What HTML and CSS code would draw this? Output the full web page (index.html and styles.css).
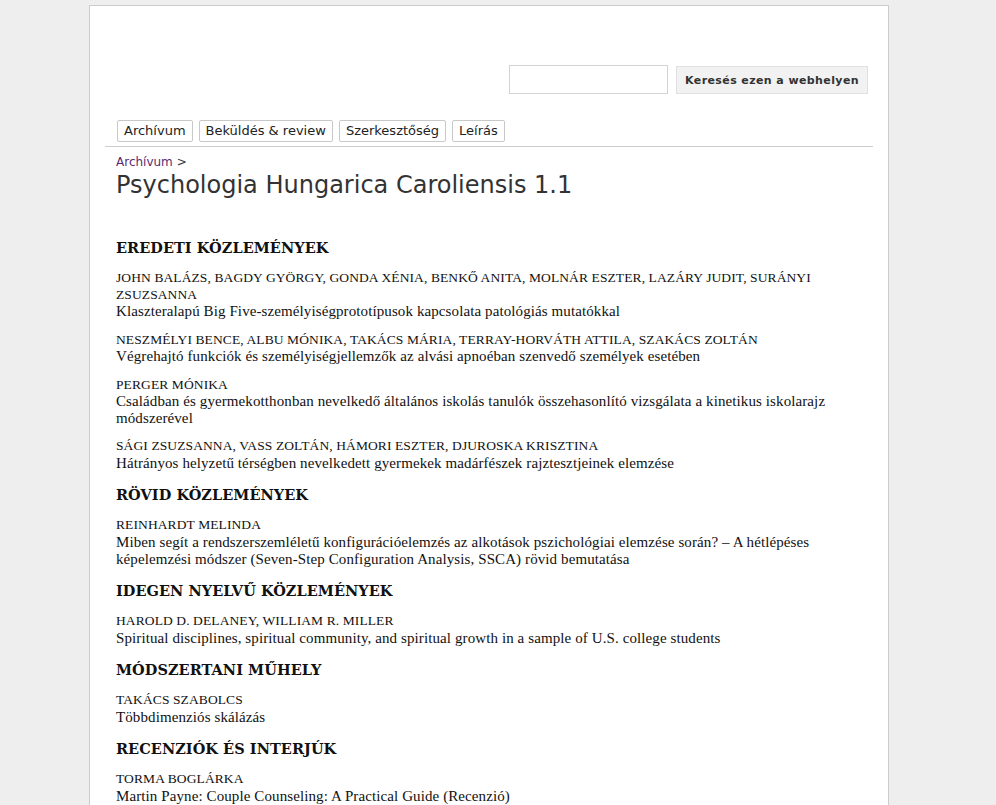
FILE: index.html
```html
<!DOCTYPE html>
<html>
<head>
    <meta charset="utf-8">
    <title>Psychologia Hungarica Caroliensis 1.1</title>
    <link rel="stylesheet" href="styles.css">
</head>
<body>
<div id="page">
    <div id="header">
        <div class="search">
            <input type="text" class="searchbox" value="">
            <button class="searchbutton">Keresés ezen a webhelyen</button>
        </div>
        <div class="nav">
            <a class="tab" href="#">Archívum</a>
            <a class="tab" href="#">Beküldés &amp; review</a>
            <a class="tab" href="#">Szerkesztőség</a>
            <a class="tab" href="#">Leírás</a>
        </div>
    </div>

    <div id="content">
        <div class="crumbs"><a href="#">Archívum</a> &gt;</div>
        <h1>Psychologia Hungarica Caroliensis 1.1</h1>

        <h2>Eredeti közlemények</h2>
        <div class="item">
            <div class="authors">JOHN BALÁZS, BAGDY GYÖRGY, GONDA XÉNIA, BENKŐ ANITA, MOLNÁR ESZTER, LAZÁRY JUDIT, SURÁNYI ZSUZSANNA</div>
            <div class="title">Klaszteralapú Big Five-személyiségprototípusok kapcsolata patológiás mutatókkal</div>
        </div>
        <div class="item">
            <div class="authors">NESZMÉLYI BENCE, ALBU MÓNIKA, TAKÁCS MÁRIA, TERRAY-HORVÁTH ATTILA, SZAKÁCS ZOLTÁN</div>
            <div class="title">Végrehajtó funkciók és személyiségjellemzők az alvási apnoéban szenvedő személyek esetében</div>
        </div>
        <div class="item">
            <div class="authors">PERGER MÓNIKA</div>
            <div class="title">Családban és gyermekotthonban nevelkedő általános iskolás tanulók összehasonlító vizsgálata a kinetikus iskolarajz módszerével</div>
        </div>
        <div class="item">
            <div class="authors">SÁGI ZSUZSANNA, VASS ZOLTÁN, HÁMORI ESZTER, DJUROSKA KRISZTINA</div>
            <div class="title">Hátrányos helyzetű térségben nevelkedett gyermekek madárfészek rajztesztjeinek elemzése</div>
        </div>

        <h2>Rövid közlemények</h2>
        <div class="item">
            <div class="authors">REINHARDT MELINDA</div>
            <div class="title">Miben segít a rendszerszemléletű konfigurációelemzés az alkotások pszichológiai elemzése során? – A hétlépéses képelemzési módszer (Seven-Step Configuration Analysis, SSCA) rövid bemutatása</div>
        </div>

        <h2>Idegen nyelvű közlemények</h2>
        <div class="item">
            <div class="authors">HAROLD D. DELANEY, WILLIAM R. MILLER</div>
            <div class="title">Spiritual disciplines, spiritual community, and spiritual growth in a sample of U.S. college students</div>
        </div>

        <h2>Módszertani műhely</h2>
        <div class="item">
            <div class="authors">TAKÁCS SZABOLCS</div>
            <div class="title">Többdimenziós skálázás</div>
        </div>

        <h2>Recenziók és interjúk</h2>
        <div class="item">
            <div class="authors">TORMA BOGLÁRKA</div>
            <div class="title">Martin Payne: Couple Counseling: A Practical Guide (Recenzió)</div>
        </div>
    </div>
</div>
</body>
</html>
```

FILE: styles.css
```css
body {
    margin: 0;
    background-color: #eeeeee;
}
#page {
    width: 798px;
    margin: 5px 0 0 89px;
    background-color: #ffffff;
    border: 1px solid #cccccc;
    border-bottom: none;
    min-height: 900px;
}
#header {
    margin: 0 15px;
    border-bottom: 1px solid #cccccc;
    padding-top: 59px;
}
.search {
    display: flex;
    justify-content: flex-end;
    gap: 8px;
    padding-right: 5px;
}
.searchbox {
    width: 159px;
    height: 29px;
    margin: 0;
    padding: 0;
    border: 1px solid #d4d4d4;
    box-sizing: border-box;
}
.searchbutton {
    margin: 1px 0 0 0;
    height: 28px;
    padding: 0 8px;
    border: 1px solid #e0e0e0;
    background-color: #f2f2f2;
    font-family: "DejaVu Sans", Verdana, sans-serif;
    font-size: 11px;
    font-weight: bold;
    letter-spacing: 0.4px;
    color: #333333;
}
.nav {
    display: flex;
    gap: 6px;
    padding: 26px 0 4px 12px;
}
.tab {
    display: inline-block;
    border: 1px solid #c8c8c8;
    border-radius: 2px;
    padding: 2px 6px;
    font-family: "DejaVu Sans", Verdana, sans-serif;
    font-size: 13px;
    line-height: 16px;
    color: #222222;
    text-decoration: none;
}
#content {
    padding: 8px 26px 0 26px;
}
.crumbs {
    font-family: "DejaVu Sans", Verdana, sans-serif;
    font-size: 12px;
    color: #333333;
}
.crumbs a {
    color: #5a2a70;
    text-decoration: none;
}
h1 {
    margin: 2px 0 40px 0;
    font-family: "DejaVu Sans", Verdana, sans-serif;
    font-weight: normal;
    font-size: 24px;
    color: #333333;
}
h2 {
    margin: 15px 0 14px 0;
    font-family: "DejaVu Serif", Georgia, serif;
    font-size: 14.5px;
    font-weight: bold;
    letter-spacing: 0.05px;
    text-transform: uppercase;
    color: #111111;
}
.item {
    margin-bottom: 12px;
    font-family: "Liberation Serif", "Times New Roman", serif;
    font-size: 15px;
    letter-spacing: 0.1px;
    line-height: 16.55px;
    color: #111111;
}
.authors {
    font-size: 13.5px;
}
```
